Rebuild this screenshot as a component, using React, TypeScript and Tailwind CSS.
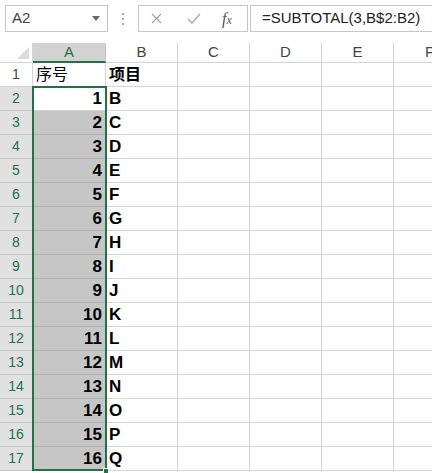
import React from 'react';

const cols = ['A', 'B', 'C', 'D', 'E', 'F'];
const colW = ['w-[73px]', 'w-[72px]', 'w-[72px]', 'w-[72px]', 'w-[72px]', 'w-[72px]'];
const items = ['B', 'C', 'D', 'E', 'F', 'G', 'H', 'I', 'J', 'K', 'L', 'M', 'N', 'O', 'P', 'Q'];

const green = 'text-[#217346]';

function Toolbar() {
  return (
    <div className="flex items-start h-[43px] pt-[5px] bg-white">
      {/* name box */}
      <div className="ml-[5px] w-[103px] h-[27px] border border-[#c6c6c6] flex items-center justify-between pl-[6px] pr-[7px] text-[15px] text-[#444]">
        <span>A2</span>
        <svg width="8" height="5" viewBox="0 0 8 5">
          <path d="M0 0 H8 L4 5 Z" fill="#6b6b6b" />
        </svg>
      </div>
      {/* drag dots */}
      <div className="w-[30px] h-[27px] flex flex-col items-center justify-center gap-[3px]">
        <span className="w-[2px] h-[2px] bg-[#a8a8a8]" />
        <span className="w-[2px] h-[2px] bg-[#a8a8a8]" />
        <span className="w-[2px] h-[2px] bg-[#a8a8a8]" />
      </div>
      {/* cancel / enter / fx */}
      <div className="w-[110px] h-[27px] border border-[#c6c6c6] flex items-center">
        <svg className="ml-[12px]" width="11" height="11" viewBox="0 0 11 11">
          <path d="M1 1 L10 10 M10 1 L1 10" stroke="#a6a6a6" strokeWidth="1.3" />
        </svg>
        <svg className="ml-[25px]" width="14" height="11" viewBox="0 0 14 11">
          <path d="M1 6 L5 10 L13 1" stroke="#a6a6a6" strokeWidth="1.3" fill="none" />
        </svg>
        <span className="ml-[21px] text-[16px] italic text-[#555] font-['Liberation_Serif',serif]">
          f<span className="text-[12px]">x</span>
        </span>
      </div>
      {/* formula */}
      <div className="ml-[2px] flex-1 h-[27px] border border-r-0 border-[#c6c6c6] flex items-center pl-[11px] text-[15px] text-[#222]">
        =SUBTOTAL(3,B$2:B2)
      </div>
    </div>
  );
}

function HeaderRow() {
  return (
    <div className="flex h-[20px]">
      <div className="relative w-[33px] shrink-0 border-r border-b border-[#d4d4d4] bg-white">
        <svg className="absolute right-[3px] bottom-[3px]" width="12" height="12" viewBox="0 0 12 12">
          <path d="M12 0 V12 H0 Z" fill="#dcdcdc" />
        </svg>
      </div>
      {cols.map((c, i) =>
        i === 0 ? (
          <div
            key={c}
            className={`${colW[i]} shrink-0 bg-[#d2d2d2] border-r border-[#c2c2c2] border-b-2 border-b-[#217346] flex items-center justify-center text-[15px] ${green}`}
          >
            {c}
          </div>
        ) : (
          <div
            key={c}
            className={`${colW[i]} shrink-0 bg-white border-r border-b border-[#d4d4d4] flex items-center justify-center text-[15px] text-[#444]`}
          >
            {c}
          </div>
        )
      )}
    </div>
  );
}

function Row({ n }: { n: number }) {
  const sel = n >= 2;
  const label = n === 1 ? '序号' : String(n - 1);
  const item = n === 1 ? '项目' : items[n - 2];
  return (
    <div className="flex h-[24px]">
      <div
        className={`w-[33px] shrink-0 border-r border-b flex items-center justify-center text-[14px] ${
          sel ? `bg-[#e1e1e1] border-[#c6c6c6] ${green}` : 'bg-white border-[#d4d4d4] text-[#444]'
        }`}
      >
        {n}
      </div>
      <div
        className={`${colW[0]} shrink-0 border-r border-b border-[#d4d4d4] flex items-center ${
          n === 1
            ? 'justify-start pl-[3px] text-[16px] text-black'
            : `justify-end pr-[3px] text-[17px] font-bold text-black ${n === 2 ? 'bg-white' : 'bg-[#c6c6c6] border-b-[#b4b4b4]'}`
        }`}
      >
        {label}
      </div>
      <div
        className={`${colW[1]} shrink-0 border-r border-b border-[#d4d4d4] flex items-center pl-[3px] text-black font-bold ${
          n === 1 ? 'text-[16px]' : 'text-[17px]'
        }`}
      >
        {item}
      </div>
      {cols.slice(2).map((c, i) => (
        <div key={c} className={`${colW[i + 2]} shrink-0 border-r border-b border-[#d4d4d4]`} />
      ))}
    </div>
  );
}

export default function App() {
  const rows = Array.from({ length: 17 }, (_, i) => i + 1);
  return (
    <div className="w-[432px] h-[473px] overflow-hidden bg-white font-['Liberation_Sans','Noto_Sans_CJK_SC',sans-serif]">
      <Toolbar />
      <div className="relative">
        <HeaderRow />
        {rows.map((n) => (
          <Row key={n} n={n} />
        ))}
        {/* selection A2:A17 */}
        <div className="absolute left-[32px] top-[43px] w-[75px] h-[385px] border-2 border-[#217346] pointer-events-none" />
        <div className="absolute left-[103px] top-[425px] w-[6px] h-[6px] bg-[#217346] border border-white" />
      </div>
    </div>
  );
}
